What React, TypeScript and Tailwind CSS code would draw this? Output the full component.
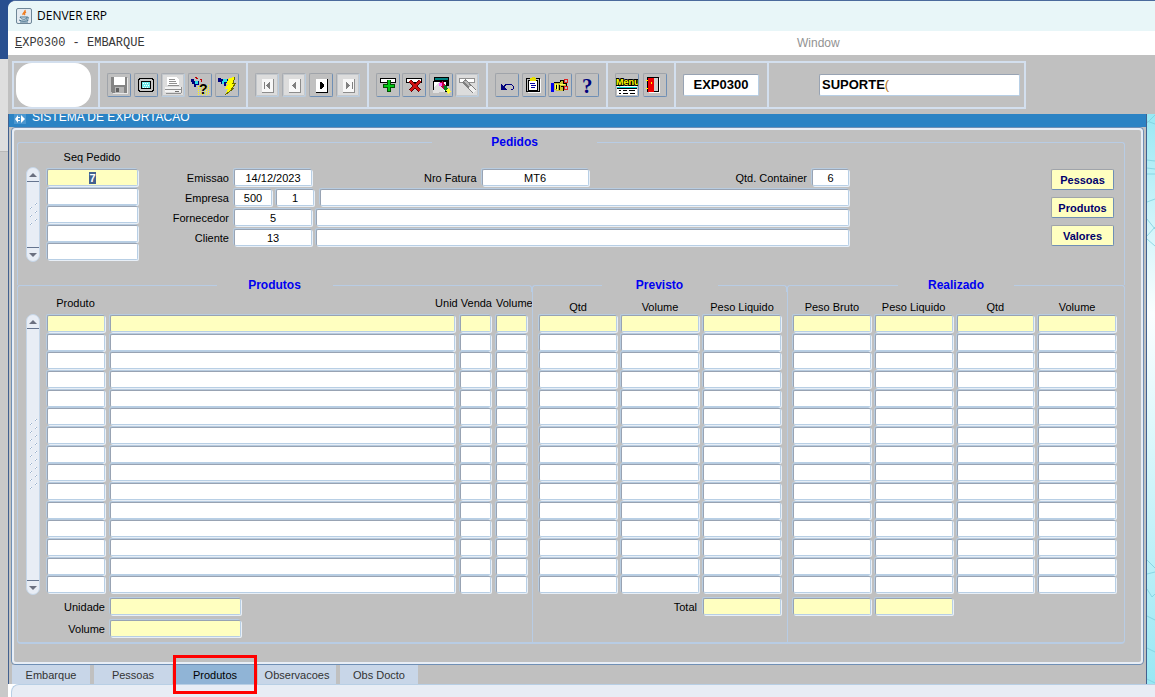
import React, { useEffect, useRef, useState } from "react";

const fieldClass =
  "block h-[17px] rounded-[2px] border border-t-[#98a3b3] border-l-[#98a3b3] border-r-[#b8cfe5] border-b-[#b8cfe5] px-1 text-center text-[11px] leading-[15px] text-black outline-none shadow-[-1px_-1px_0_#b8cce0,1px_1px_0_#e8eff7] selection:bg-[#43618f] selection:text-white";

type FieldProps = {
  label: string;
  id?: string;
  value?: string;
  className?: string;
  yellow?: boolean;
};

const Field: React.FC<FieldProps> = ({ label, id, value = "", className = "w-full", yellow }) => (
  <input
    id={id}
    aria-label={id ? undefined : label}
    defaultValue={value}
    className={`${fieldClass} ${yellow ? "bg-[#ffffc0]" : "bg-white"} ${className}`}
  />
);

type ScrollProps = { name: string; className: string; dots: number };

const ScrollBar: React.FC<ScrollProps> = ({ name, className, dots }) => (
  <div
    className={`flex w-[14px] shrink-0 flex-col items-center justify-between overflow-hidden rounded-full border border-[#c5d6e8] bg-[#e8edf5] ${className}`}
  >
    <button
      aria-label={`${name} acima`}
      className="flex h-[14px] w-full shrink-0 items-center justify-center border-b border-[#66758f]"
    >
      <svg width="8" height="4" viewBox="0 0 8 4">
        <path d="M0 4L4 0L8 4Z" fill="#6b7080" />
      </svg>
    </button>
    <svg width="10" height={dots * 8} viewBox={`0 0 10 ${dots * 8}`} shapeRendering="crispEdges">
      {Array.from({ length: dots }, (_, i) => (
        <g key={i}>
          <path d={`M7 ${i * 8}h2v2h-2zM2 ${i * 8 + 4}h2v2h-2z`} fill="#fff" />
          <path
            d={`M8 ${i * 8}h1v1h-1zM7 ${i * 8 + 1}h1v1h-1zM3 ${i * 8 + 4}h1v1h-1zM2 ${i * 8 + 5}h1v1h-1z`}
            fill="#9db4cf"
          />
        </g>
      ))}
    </svg>
    <button
      aria-label={`${name} abaixo`}
      className="flex h-[14px] w-full shrink-0 items-center justify-center border-t border-[#66758f]"
    >
      <svg width="8" height="4" viewBox="0 0 8 4">
        <path d="M0 0L4 4L8 0Z" fill="#6b7080" />
      </svg>
    </button>
  </div>
);

type LegendProps = { title: string; gap: string; left?: string; right?: string };

const Legend: React.FC<LegendProps> = ({ title, gap, left = "grow", right = "grow" }) => (
  <div className="flex h-[14px] items-end">
    <div className={`h-[7px] basis-0 rounded-tl-[3px] border-t border-l border-[#b8cce4] ${left}`} />
    <h2 className={`shrink-0 text-center text-xs leading-[14px] font-bold text-[#0000f0] ${gap}`}>{title}</h2>
    <div className={`h-[7px] basis-0 rounded-tr-[3px] border-t border-r border-[#b8cce4] ${right}`} />
  </div>
);

const icons: Record<string, React.ReactNode> = {
  Salvar: (
    <>
      <path d="M4 4h16v16H5l-1-1z" fill="#848484" />
      <path d="M7 4h11v8H7z" fill="#fff" />
      <path d="M8 14h9v6H8z" fill="#b4b4b4" />
      <path d="M9 15h3v4H9z" fill="#606060" />
      <path d="M20 5h1v16H6v-1h14z" fill="#e8e8e8" />
    </>
  ),
  Tela: (
    <>
      <path d="M5 5h14v1h1v12h-1v1H5v-1H4V6h1z" fill="#000" />
      <path d="M6 6h12v1h1v10h-1v1H6v-1H5V7h1z" fill="#c8c8c8" />
      <path d="M7 8h10v8H7z" fill="#000" />
      <path d="M8 9h8v6H8z" fill="#6ee8e8" />
      <path d="M9 10h1v1H9zM11 10h1v1h-1zM13 10h1v1h-1zM10 12h1v1h-1zM12 12h1v1h-1zM14 12h1v1h-1zM9 14h1v1H9zM11 14h1v1h-1zM13 14h1v1h-1z" fill="#fff" />
    </>
  ),
  Imprimir: (
    <>
      <path d="M6 4h9l3 3v5H6z" fill="#fff" />
      <path d="M8 6h6v1H8zM8 8h7v1H8zM8 10h8v1H8zM7 12h11v1H7z" fill="#909090" />
      <path d="M4 14h16v5H4z" fill="#f4f4f4" />
      <path d="M4 16h16v1H4zM5 20h15v1H5zM20 14h1v6h-1z" fill="#909090" />
      <path d="M14 18h4v1h-4z" fill="#707070" />
    </>
  ),
  "Entrar consulta": (
    <>
      <path d="M3 6h3v2h5v4H8v2H6v-3H4V9H3z" fill="#00007c" />
      <path d="M7 8h3v3H7z" fill="#2be0e8" />
      <path d="M7 4h2v1h1v1H8V5H7zM12 6h2v3h-1V7h-1z" fill="#c00000" />
      {[13, 15, 17, 19, 21].map((y) => (
        <path key={y} d={`M10 ${y}h1v1h-1zM12 ${y - 1}h1v1h-1zM14 ${y}h1v1h-1zM16 ${y - 1}h1v1h-1zM18 ${y}h1v1h-1zM20 ${y - 1}h1v1h-1z`} fill="#ffff00" />
      ))}
      <text x="11" y="21" fontSize="14" fontWeight="bold" fontFamily="Liberation Sans, sans-serif" fill="#000">?</text>
    </>
  ),
  "Executar consulta": (
    <>
      <path d="M3 5h3v1h7v4h-2v3H9v-2H6V9H3z" fill="#00007c" />
      <path d="M8 6h4v3H9v2H7V8h1z" fill="#2be0e8" />
      <path d="M14 5l6-1l-2 6h3l-4 5h2l-9 7l3-6h-3l3-5h-2z" fill="#ffff00" />
      <path d="M20 4l-2 6h3l-4 5h2l-9 7" fill="none" stroke="#6a6a00" />
    </>
  ),
  Primeiro: (
    <>
      <path d="M7 6h11v13H7z" fill="#f8f8f8" />
      <path d="M18 6h1v14H7v-1h11z" fill="#8c8c8c" />
      <path d="M9 9h1v7H9zM15 9v7l-4-3v-1z" fill="#808080" />
    </>
  ),
  Anterior: (
    <>
      <path d="M7 6h11v13H7z" fill="#f8f8f8" />
      <path d="M18 6h1v14H7v-1h11z" fill="#8c8c8c" />
      <path d="M14 9v7l-4-3v-1z" fill="#808080" />
    </>
  ),
  Proximo: (
    <>
      <path d="M7 6h11v13H7z" fill="#fff" />
      <path d="M18 6h1v14H7v-1h11z" fill="#000" />
      <path d="M11 9v7h1l3-3v-1l-3-3z" fill="#000" />
    </>
  ),
  Ultimo: (
    <>
      <path d="M7 6h11v13H7z" fill="#f8f8f8" />
      <path d="M18 6h1v14H7v-1h11z" fill="#8c8c8c" />
      <path d="M10 9v7l4-3v-1zM16 9h1v7h-1z" fill="#808080" />
    </>
  ),
  Inserir: (
    <>
      <path d="M4 5h16v5H4z" fill="#000" />
      <path d="M5 6h14v3H5z" fill="#fff" />
      <path d="M11 7h4v4h4v4h-4v4h-4v-4H7v-4h4z" fill="#005000" />
      <path d="M12 7h2v5h4v2h-4v4h-2v-4H8v-2h4z" fill="#00c814" />
    </>
  ),
  Excluir: (
    <>
      <path d="M4 5h16v5H4z" fill="#000" />
      <path d="M5 6h14v3H5z" fill="#fff" />
      <path d="M8 8l10 10M18 8L8 18" stroke="#600000" strokeWidth="4" />
      <path d="M8 8l10 10M18 8L8 18" stroke="#d01010" strokeWidth="2" />
    </>
  ),
  "Limpar registro": (
    <>
      <path d="M5 4h15v9H5z" fill="#000" />
      <path d="M6 5h13v2H6z" fill="#008080" />
      <path d="M4 8h14v11H4z" fill="#000" />
      <path d="M5 9h12v9H5z" fill="#fff" />
      <path d="M4 20l1-6l6-5l5 10z" fill="#e0e0e0" />
      <path d="M10 10l4-2l3 5l-3 3z" fill="#c00040" />
      <path d="M10 10h3v3h-3z" fill="#ff60ff" />
      <path d="M14 13l3-1l2 4l-3 2z" fill="#008020" />
      <path d="M17 17l3-2l2 4l-3 2z" fill="#ffff30" />
    </>
  ),
  "Limpar bloco": (
    <>
      <path d="M4 5h16v5H4z" fill="#909090" />
      <path d="M5 6h14v3H5z" fill="#fff" />
      <path d="M9 8l11 11" stroke="#808080" strokeWidth="5" />
      <path d="M10 8l8 9" stroke="#b8b8b8" strokeWidth="2" />
      <path d="M15 14l5 5" stroke="#f0f0f0" strokeWidth="3" />
    </>
  ),
  Desfazer: (
    <>
      <path d="M6 11v6h6z" fill="#00007c" />
      <path d="M9 14l2-3h5l2 2v3l-2 1" fill="none" stroke="#00007c" />
    </>
  ),
  Colar: (
    <>
      <path d="M4 5h14v14H4z" fill="#000" />
      <path d="M5 6h12v12H5z" fill="#c0c0c0" />
      <path d="M6 7h10v11H6z" fill="#000" />
      <path d="M7 8h8v9H7z" fill="#fff" />
      <path d="M9 5h1V4h3v1h1v3H8V5z" fill="#e8e000" />
      <path d="M8 10h5v1H8zM9 12h5v1H9zM9 14h4v1H9z" fill="#0000a0" />
      <path d="M18 6h1v14H6v-1h12z" fill="#f8f8f8" />
    </>
  ),
  Recortar: (
    <>
      <path d="M3 10h3v9H3z" fill="#0000f0" />
      <path d="M6 10l3-1h3l1-2h2v3h3v3h-3v5H9l-3-1z" fill="#c8c030" />
      <path d="M6 10l3-1h3l1-2h2v3h3v3h-5M8 12v4M11 12v5M15 13v5" fill="none" stroke="#000" />
      <path d="M7 11h1v5H7zM9 11h1v6H9zM12 11h5v1h-5z" fill="#ffff60" />
      <circle cx="18" cy="8" r="2" fill="none" stroke="#e02020" />
      <circle cx="18" cy="15" r="2" fill="none" stroke="#e02020" />
    </>
  ),
  Ajuda: (
    <text x="7" y="20" fontSize="21" fontWeight="bold" fontFamily="Liberation Serif, serif" fill="#00007c">?</text>
  ),
  Menu: (
    <>
      <path d="M2 13h20v9H2z" fill="#fff" />
      <path d="M2 14h20v1H2z" fill="#00d8d8" />
      <path d="M2 15h20v1H2zM4 17h2v1H4zM8 17h4v1H8zM14 17h6v1h-6zM4 20h2v1H4zM8 20h5v1H8zM15 20h5v1h-5z" fill="#000" />
      <text x="1" y="12" fontSize="9" fontWeight="bold" fontFamily="Liberation Sans Narrow, Liberation Sans, sans-serif" fill="#ffff00" stroke="#000" strokeWidth="2" paintOrder="stroke">Menu</text>
    </>
  ),
  Sair: (
    <>
      <path d="M4 4h12v15H4z" fill="#000" />
      <path d="M11 5h4v13h-4z" fill="#d0d0d0" />
      <path d="M5 5h6v13l-1 1H5z" fill="#f00000" />
      <path d="M8 9h1v2H8zM3 7h2v1H3zM3 15h2v1H3z" fill="#ffff00" />
      <path d="M16 5h1v15H6v-1h10z" fill="#f8f8f8" />
    </>
  ),
};

const disabledTools = ["Imprimir", "Primeiro", "Anterior", "Ultimo", "Limpar bloco"];

const ToolGroup: React.FC<{ names: string[]; className: string }> = ({ names, className }) => (
  <div className={`flex shrink-0 items-center justify-between border-l-2 border-[#d3dfee] px-[7px] ${className}`}>
    {names.map((name) => {
      const disabled = disabledTools.includes(name);
      return (
        <button
          key={name}
          aria-label={name}
          disabled={disabled}
          className={`h-6 w-6 rounded-[2px] border ${
            disabled
              ? "border-t-[#a8acb2] border-l-[#a8acb2] border-r-[#b8cce0] border-b-[#b8cce0] bg-[#dcdcdc] shadow-[inset_0_0_0_1px_#c4c8cc]"
              : "border-t-[#a0a4aa] border-l-[#a0a4aa] border-r-[#6f8fb5] border-b-[#6f8fb5]"
          }`}
        >
          <svg width="22" height="22" viewBox="1 1 22 22" shapeRendering="crispEdges">
            {icons[name]}
          </svg>
        </button>
      );
    })}
  </div>
);

const Toolbar: React.FC = () => (
  <div className="bg-[#c0c0c0] px-1 pt-[6px] pb-[5px]">
    <div className="flex h-12 w-fit border-2 border-[#d3dfee]">
      <div className="w-[84px] shrink-0 pl-[2px]">
        <div className="h-full w-[75px] rounded-2xl bg-white" />
      </div>
      <ToolGroup className="w-[148px]" names={["Salvar", "Tela", "Imprimir", "Entrar consulta", "Executar consulta"]} />
      <ToolGroup className="w-[121px]" names={["Primeiro", "Anterior", "Proximo", "Ultimo"]} />
      <ToolGroup className="w-[119px]" names={["Inserir", "Excluir", "Limpar registro", "Limpar bloco"]} />
      <ToolGroup className="w-[120px]" names={["Desfazer", "Colar", "Recortar", "Ajuda"]} />
      <ToolGroup className="w-[68px]" names={["Menu", "Sair"]} />
      <div className="flex w-[93px] shrink-0 items-center border-l-2 border-[#d3dfee] pr-2 pl-[7px]">
        <output className="h-[22px] w-full rounded-[2px] border border-t-[#98a3b3] border-l-[#98a3b3] border-r-[#b8cfe5] border-b-[#b8cfe5] bg-white text-center text-[13px] leading-5 font-bold">
          EXP0300
        </output>
      </div>
      <div className="flex w-[257px] shrink-0 items-center border-l-2 border-[#d3dfee] pr-1 pl-[50px]">
        <output className="h-[22px] w-full rounded-[2px] border border-t-[#98a3b3] border-l-[#98a3b3] border-r-[#b8cfe5] border-b-[#b8cfe5] bg-white pl-0.5 text-[13px] leading-5 font-bold">
          SUPORTE<span className="font-normal text-[#b07020]">(</span>
        </output>
      </div>
    </div>
  </div>
);

const SeqPedido: React.FC = () => {
  const current = useRef<HTMLInputElement>(null);

  useEffect(() => {
    current.current?.focus();
    current.current?.select();
  }, []);

  return (
    <div className="flex shrink-0 items-end gap-[7px]">
      <ScrollBar name="Pedidos" className="h-[95px]" dots={3} />
      <table className="h-[113px] w-[92px] table-fixed border-collapse">
        <thead>
          <tr className="h-5">
            <th className="p-0 pt-[1px] pr-[2px] align-top leading-[14px] font-normal">Seq Pedido</th>
          </tr>
        </thead>
        <tbody>
          {["7", "", "", "", ""].map((seq, i) => (
            <tr key={i}>
              <td className="p-0 pr-[1px] align-top">
                <input
                  ref={i === 0 ? current : undefined}
                  aria-label={`Seq Pedido ${i + 1}`}
                  defaultValue={seq}
                  className={`${fieldClass} w-full ${i === 0 ? "bg-[#ffffc0] font-bold" : "bg-white"}`}
                />
              </td>
            </tr>
          ))}
        </tbody>
      </table>
    </div>
  );
};

const labelClass = "w-[95px] shrink-0 pr-[5px] text-right";

const PedidoForm: React.FC = () => (
  <div className="flex flex-1 flex-col gap-[3px] pt-5">
    <div className="flex items-center">
      <label htmlFor="emissao" className={labelClass}>Emissao</label>
      <Field id="emissao" label="Emissao" value="14/12/2023" className="w-[78px]" />
      <label htmlFor="fatura" className="pr-[5px] pl-[112px]">Nro Fatura</label>
      <Field id="fatura" label="Nro Fatura" value="MT6" className="w-[107px]" />
      <label htmlFor="container" className="ml-auto pr-[5px]">Qtd. Container</label>
      <Field id="container" label="Qtd. Container" value="6" className="w-[37px]" />
    </div>
    <div className="flex items-center">
      <label htmlFor="empresa" className={labelClass}>Empresa</label>
      <Field id="empresa" label="Empresa" value="500" className="w-[38px]" />
      <Field label="Filial" value="1" className="ml-1 w-[38px]" />
      <Field label="Nome da empresa" className="ml-[6px] flex-1" />
    </div>
    <div className="flex items-center">
      <label htmlFor="fornecedor" className={labelClass}>Fornecedor</label>
      <Field id="fornecedor" label="Fornecedor" value="5" className="w-[78px]" />
      <Field label="Nome do fornecedor" className="ml-1 flex-1" />
    </div>
    <div className="flex items-center">
      <label htmlFor="cliente" className={labelClass}>Cliente</label>
      <Field id="cliente" label="Cliente" value="13" className="w-[78px]" />
      <Field label="Nome do cliente" className="ml-1 flex-1" />
    </div>
  </div>
);

const rows = Array.from({ length: 15 }, (_, i) => i);

const GridTable: React.FC<{ group: string; columns: string[] }> = ({ group, columns }) => (
  <table className="h-[303px] w-full table-fixed border-collapse">
    <thead>
      <tr className="h-[23px]">
        {columns.map((column) => (
          <th key={column} className="p-0 pt-2 pr-1 align-top leading-[14px] font-normal whitespace-nowrap">
            {column}
          </th>
        ))}
      </tr>
    </thead>
    <tbody>
      {rows.map((row) => (
        <tr key={row}>
          {columns.map((column) => (
            <td key={column} className="p-0 pr-1 align-top">
              <Field label={`${group} ${column} ${row + 1}`} yellow={row === 0} />
            </td>
          ))}
        </tr>
      ))}
    </tbody>
  </table>
);

const ProdutosTable: React.FC = () => (
  <table className="h-[303px] w-full table-fixed border-collapse">
    <colgroup>
      <col className="w-[63px]" />
      <col />
      <col className="w-9" />
      <col className="w-9" />
    </colgroup>
    <thead>
      <tr className="h-[23px]">
        <th className="p-0 pt-1 pr-[6px] align-top leading-[14px] font-normal">Produto</th>
        <th colSpan={2} className="p-0 pt-1 pr-1 text-right align-top leading-[14px] font-normal">
          Unid Venda
        </th>
        <th className="p-0 pt-1 align-top leading-[14px] font-normal">Volume</th>
      </tr>
    </thead>
    <tbody>
      {rows.map((row) => (
        <tr key={row}>
          {["Produto", "Descricao", "Unid Venda", "Volume"].map((column) => (
            <td key={column} className="p-0 pr-[5px] align-top">
              <Field label={`${column} ${row + 1}`} yellow={row === 0} />
            </td>
          ))}
        </tr>
      ))}
    </tbody>
  </table>
);

const JavaIcon = () => (
  <svg width="16" height="16" viewBox="0 0 16 16">
    <rect x=".5" y=".5" width="15" height="15" rx="1.5" fill="#e4ebf1" stroke="#6e8798" />
    <path d="M9 2c1 2-3 3-2 5M10 4c-2 1-2 2-1 3" fill="none" stroke="#ef7d22" strokeWidth="1.4" />
    <path d="M4 9h7c0 3-6 3-7 0zM11 9c3 0 1 3-1 2M3 12c3 1.500 7 1.500 9.500 0M4 14h8" fill="none" stroke="#48748f" />
  </svg>
);

const tabs = ["Embarque", "Pessoas", "Produtos", "Observacoes", "Obs Docto"];

const App: React.FC = () => {
  const [activeTab, setActiveTab] = useState("Produtos");

  return (
    <div className="flex min-h-screen bg-[#284f90] font-['Liberation_Sans',Arial,sans-serif] text-[11px] leading-[14px] text-black">
      <div className="flex w-2 shrink-0 flex-col">
        <div className="h-[59px]" />
        <div className="h-[92px] bg-[#dedede]" />
        <div className="flex-1 border-t border-[#b8b8b8] bg-[#c9c9c9]" />
      </div>

      <div className="flex min-w-0 flex-1 flex-col overflow-hidden rounded-tl-lg border-t border-[#4a6a9c] bg-white">
        <header className="flex h-[30px] items-center gap-[5px] bg-[#e8f6f8] pl-2">
          <JavaIcon />
          <h1 className="font-['Open_Sans','Noto_Sans',sans-serif] text-xs">DENVER ERP</h1>
        </header>

        <nav className="flex h-6 items-center pl-[7px] text-xs">
          <a href="#embarque" className="w-[782px] font-['Liberation_Mono',monospace] text-[#383838]">
            <span className="underline">E</span>XP0300 - EMBARQUE
          </a>
          <a href="#window" className="text-[#929292]">Window</a>
        </nav>

        <Toolbar />

        <div className="flex flex-1">
          <main className="flex min-w-0 flex-1 flex-col border-x border-[#43618f] bg-[#c0c0c0]">
            <div className="flex h-[13px] items-start gap-[6px] overflow-hidden bg-[#2b83c4] pl-[5px]">
              <svg width="12" height="10" viewBox="0 0 12 10" className="shrink-0">
                <path d="M0 0h12v10H0z" fill="#4b97d0" />
                <path d="M1 5l3-4v8zM11 5L7 1v8z" fill="#fff" />
                <path d="M3 3h3v1H3zM3 6h3v1H3z" fill="#fff" />
              </svg>
              <h2 className="-mt-[5px] text-xs text-white">SISTEMA DE EXPORTACAO</h2>
            </div>

            <div className="flex flex-1 flex-col pr-[2px] pl-[2px]">
              <section className="flex-1 rounded-sm border border-[#6f8fb5]">
                <div className="h-full rounded-sm border-2 border-[#e8eef6] pt-[5px] pr-4 pl-[3px]">
                  <Legend title="Pedidos" gap="w-[165px]" left="grow-[415]" right="grow-[528]" />
                  <div className="flex border-x border-[#b8cce4] pr-[10px] pb-[23px] pl-[8px]">
                    <SeqPedido />
                    <PedidoForm />
                    <div className="flex flex-col gap-[7px] pt-5 pl-[202px]">
                      {["Pessoas", "Produtos", "Valores"].map((name) => (
                        <button
                          key={name}
                          className="h-[21px] w-[63px] rounded-[2px] border border-t-[#a0a4aa] border-l-[#a0a4aa] border-r-[#6f8fb5] border-b-[#6f8fb5] bg-[#ffffc0] text-[11px] leading-[18px] font-bold text-[#00006c]"
                        >
                          {name}
                        </button>
                      ))}
                    </div>
                  </div>

                  <div className="-mt-[7px] flex">
                    <section className="flex min-w-0 flex-1 flex-col">
                      <Legend title="Produtos" gap="w-[116px]" />
                      <div className="flex-1 rounded-bl border-b-2 border-l border-[#b8cce4] pb-[5px] pl-[8px]">
                        <div className="flex items-end gap-[7px]">
                          <ScrollBar name="Produtos" className="h-[281px]" dots={9} />
                          <ProdutosTable />
                        </div>
                        <div className="flex flex-col gap-[5px] pt-[3px]">
                          <div className="flex items-center">
                            <label htmlFor="unidade" className="w-[84px] pr-[5px] text-right">Unidade</label>
                            <Field id="unidade" label="Unidade" yellow className="w-[131px]" />
                          </div>
                          <div className="flex items-center">
                            <label htmlFor="volume" className="w-[84px] pr-[5px] text-right">Volume</label>
                            <Field id="volume" label="Volume" yellow className="w-[131px]" />
                          </div>
                        </div>
                      </div>
                    </section>

                    <section className="flex w-[255px] shrink-0 flex-col">
                      <Legend title="Previsto" gap="w-[116px]" />
                      <div className="flex-1 border-b-2 border-l border-[#b8cce4] pr-[2px] pl-[6px]">
                        <GridTable group="Previsto" columns={["Qtd", "Volume", "Peso Liquido"]} />
                        <div className="flex items-center justify-end pt-[3px] pr-1">
                          <label htmlFor="total" className="pr-[6px]">Total</label>
                          <Field id="total" label="Total" yellow className="w-[78px]" />
                        </div>
                      </div>
                    </section>

                    <section className="flex w-[338px] shrink-0 flex-col">
                      <Legend title="Realizado" gap="w-[116px]" />
                      <div className="flex-1 rounded-br border-x border-b-2 border-[#b8cce4] pr-1 pl-[5px]">
                        <GridTable group="Realizado" columns={["Peso Bruto", "Peso Liquido", "Qtd", "Volume"]} />
                        <div className="flex gap-1 pt-[3px]">
                          <Field label="Total Peso Bruto" yellow className="w-[78px]" />
                          <Field label="Total Peso Liquido" yellow className="w-[78px]" />
                        </div>
                      </div>
                    </section>
                  </div>
                </div>
              </section>
            </div>

            <div role="tablist" className="flex gap-1 pl-[3px]">
              {tabs.map((tab) => (
                <button
                  key={tab}
                  role="tab"
                  aria-selected={tab === activeTab}
                  onClick={() => setActiveTab(tab)}
                  className={`relative h-[19px] w-[78px] text-[11px] whitespace-nowrap ${
                    tab === activeTab ? "bg-[#90b4d6] text-black" : "bg-[#c8d6e8] text-[#333]"
                  }`}
                >
                  {tab}
                  {tab === activeTab && (
                    <span className="absolute -inset-x-[3px] -inset-y-[10px] z-10 border-3 border-[#ff0000]" />
                  )}
                </button>
              ))}
            </div>
          </main>

          <div className="flex w-2 shrink-0 bg-linear-to-b from-[#98e8f4] via-[#fafeff] via-35% to-[#98e8f4]">
            <svg className="h-full w-full" viewBox="0 0 8 570" preserveAspectRatio="none">
              <path
                d="M0 9l8-8M0 7l8 3M0 46l8 1M0 54l8 1M0 60h8M0 88l8-3M0 105l8 10M0 122l8-9M0 125l8 7M0 446l8 8M0 460l8-2M0 475l5 8l3-3M0 502l8 4M0 534l8 4M0 565l8 4"
                fill="none"
                stroke="#7fcfdd"
                strokeWidth=".8"
              />
            </svg>
          </div>
        </div>

        <footer className="h-[13px] pl-[3px]">
          <div className="h-full rounded-tl-lg border-t border-l border-[#b8cfe5] bg-[#e8edf5]" />
        </footer>
      </div>
    </div>
  );
};

export default App;
